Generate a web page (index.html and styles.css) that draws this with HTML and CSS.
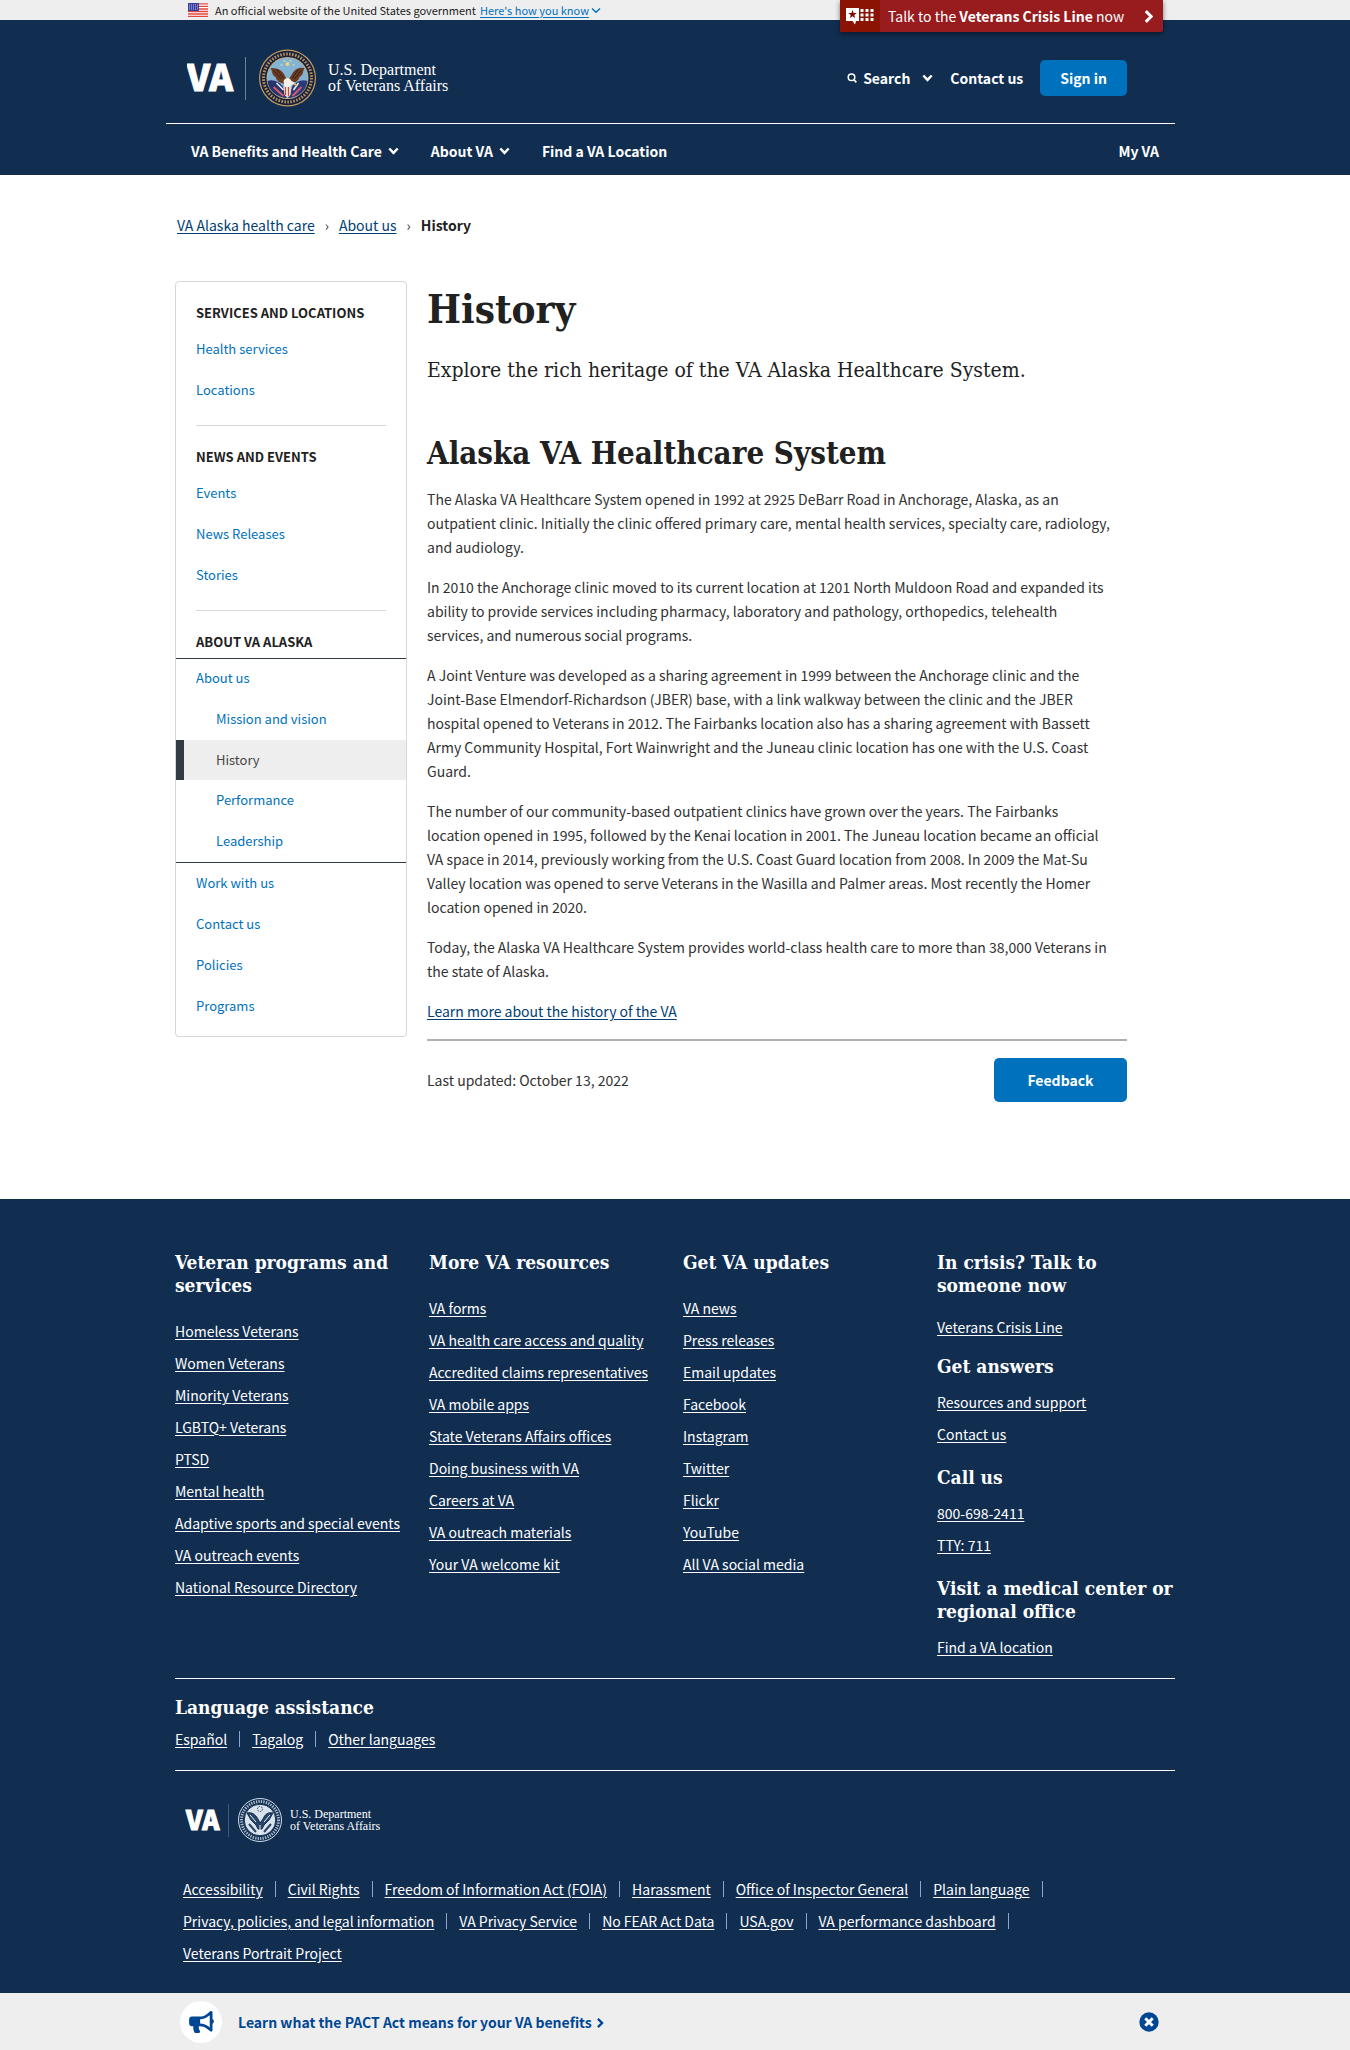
FILE: index.html
```html
<!DOCTYPE html>
<html lang="en">
<head>
<meta charset="utf-8">
<meta name="viewport" content="width=device-width, initial-scale=1">
<title>History | VA Alaska Health Care</title>
<link rel="stylesheet" href="styles.css">
</head>
<body>
<svg width="0" height="0" class="sprite" aria-hidden="true">
  <symbol id="chev-down" viewBox="0 0 10 7"><path d="M1.2 1.2 5 5.2l3.800-4" fill="none" stroke="currentColor" stroke-width="2.200"/></symbol>
  <symbol id="chev-right" viewBox="0 0 8 12"><path d="M1.500 1 6.500 6l-5 5" fill="none" stroke="currentColor" stroke-width="2.800"/></symbol>
</svg>

<div class="gov-banner">
  <div class="wrap gov-inner">
    <svg class="flag" viewBox="0 0 20 14" aria-hidden="true">
      <rect width="20" height="14" fill="#fff"/>
      <path d="M0 .8h20M0 3.400h20M0 6h20M0 8.500h20M0 11h20M0 13.400h20" stroke="#e0483e" stroke-width="1.300"/>
      <rect width="11" height="8" fill="#3a3f9f"/>
      <path d="M1 2h9M1 4h9M1 6h9" stroke="#b9bce8" stroke-width="1" stroke-dasharray="1 1"/>
    </svg>
    <span>An official website of the United States government</span>
    <button type="button" class="know"><span>Here's how you know</span><svg viewBox="0 0 10 7" aria-hidden="true"><path d="M1 1.500 5 5.300l4-3.800" fill="none" stroke="currentColor" stroke-width="1.400"/></svg></button>
    <a class="crisis" href="#crisis">
      <span class="crisis-icon">
        <svg viewBox="0 0 29 18" aria-hidden="true">
          <path d="M1 1h13v13h-3l-1 3.500L7.500 14H1z" fill="#fff"/>
          <path d="m7.500 3 1.100 3.100h3.200L9.300 8l.9 3.100-2.700-1.900-2.700 1.900.9-3.100-2.500-1.900h3.200z" fill="#7c0b05"/>
          <path d="M15.500 3.500h13M15.500 8h13M15.500 12.500h13" stroke="#fff" stroke-width="3" stroke-dasharray="3 2"/>
        </svg>
      </span>
      <span class="crisis-text">Talk to the <b>Veterans Crisis Line</b> now</span>
      <svg class="crisis-chev" aria-hidden="true"><use href="#chev-right"/></svg>
    </a>
  </div>
</div>

<header class="header">
  <div class="wrap">
    <div class="header-main">
      <a class="logo" href="#home" aria-label="VA, U.S. Department of Veterans Affairs">
        <svg width="270" height="60" viewBox="0 0 270 60">
          <text x="0" y="43" class="logo-va">VA</text>
          <path d="M58.500 9v43" stroke="#6d7f9b"/>
          <g transform="translate(100.500 30)">
            <circle r="28.500" fill="#c79a5d"/>
            <circle r="27.300" fill="#15233f"/>
            <circle r="24" fill="none" stroke="#b98f5c" stroke-width="3" stroke-dasharray="1.600 1.400"/>
            <circle r="21" fill="#d8a869"/>
            <circle r="20.200" fill="#84b4d4"/>
            <path d="M-20 3C-15 1-9 3-5 8L0 20C-10 20-19 13-20 3z" fill="#26356e"/>
            <path d="M20 3C15 1 9 3 5 8L0 20C10 20 19 13 20 3z" fill="#2b3a78"/>
            <path d="M-14 9-4 18M14 9 5 18" stroke="#d7596a" stroke-width="2"/>
            <path d="M-11 5-4 12M11 5 6 12" stroke="#eceff5" stroke-width="1.500"/>
            <path d="M-17-10C-11-10-6-9-3-3L0 3 4-3C7-9 11-11 17-10 15-6 16-3 12-1 11 3 7 5 3 6L-3 6C-7 5-11 3-12-1-16-3-15-7-17-10z" fill="#6b3c24"/>
            <path d="M-14-8-6 1M-11-9-4 0M14-8 7 1M11-9 5 0" stroke="#3a1f18"/>
            <path d="M-4 3C-2-1 2-1 4 3L8 5 4 7 2 10-3 9z" fill="#f5efe6"/>
            <path d="M8 5 10 8 6 7z" fill="#eab64a"/>
            <path d="M-4 9h8l-1 8-3 3-3-3z" fill="#e9d3c5"/>
            <path d="M-2 9v8M1 9v9" stroke="#c8484f"/>
            <circle cy="-14" r="2" fill="#f0d27a"/>
            <path d="M-7-13h2M5-13h2M-4-17h2M2-17h2" stroke="#f0e3a4"/>
          </g>
          <text x="141" y="27" class="logo-dept">U.S. Department</text>
          <text x="141" y="43" class="logo-dept">of Veterans Affairs</text>
        </svg>
      </a>
      <div class="header-tools">
        <button type="button" class="search">
          <svg class="glass" viewBox="0 0 10 10" aria-hidden="true"><circle cx="4.500" cy="4.200" r="3.300" fill="none" stroke="currentColor" stroke-width="1.500"/><path d="m6.800 6.600 2.500 2.700" stroke="currentColor" stroke-width="1.700"/></svg>
          <span>Search</span>
          <svg class="chev" aria-hidden="true"><use href="#chev-down"/></svg>
        </button>
        <a href="#contact">Contact us</a>
        <button type="button" class="btn sign-in">Sign in</button>
      </div>
    </div>
    <nav class="main-nav" aria-label="Main">
      <button type="button">VA Benefits and Health Care<svg class="chev" aria-hidden="true"><use href="#chev-down"/></svg></button>
      <button type="button">About VA<svg class="chev" aria-hidden="true"><use href="#chev-down"/></svg></button>
      <a href="#find">Find a VA Location</a>
      <a class="my-va" href="#my-va">My VA</a>
    </nav>
  </div>
</header>

<div class="wrap page">
  <nav class="crumbs" aria-label="Breadcrumb">
    <a href="#alaska">VA Alaska health care</a><span>›</span><a href="#about">About us</a><span>›</span><strong>History</strong>
  </nav>
  <div class="columns">
    <nav class="side" aria-label="Section">
      <section class="side-group">
        <h2>Services and locations</h2>
        <ul>
          <li><a href="#hs">Health services</a></li>
          <li><a href="#loc">Locations</a></li>
        </ul>
      </section>
      <section class="side-group">
        <h2>News and events</h2>
        <ul>
          <li><a href="#ev">Events</a></li>
          <li><a href="#nr">News Releases</a></li>
          <li><a href="#st">Stories</a></li>
        </ul>
      </section>
      <section class="side-group">
        <h2>About VA Alaska</h2>
        <ul>
          <li class="open"><a href="#au">About us</a>
            <ul class="sub">
              <li><a href="#mv">Mission and vision</a></li>
              <li><a class="current" href="#hi" aria-current="page">History</a></li>
              <li><a href="#pe">Performance</a></li>
              <li><a href="#le">Leadership</a></li>
            </ul>
          </li>
          <li><a href="#ww">Work with us</a></li>
          <li><a href="#cu">Contact us</a></li>
          <li><a href="#po">Policies</a></li>
          <li><a href="#pr">Programs</a></li>
        </ul>
      </section>
    </nav>
    <main class="content">
      <h1>History</h1>
      <p class="intro">Explore the rich heritage of the VA Alaska Healthcare System.</p>
      <h2>Alaska VA Healthcare System</h2>
      <p>The Alaska VA Healthcare System opened in 1992 at 2925 DeBarr Road in Anchorage, Alaska, as an outpatient clinic. Initially the clinic offered primary care, mental health services, specialty care, radiology, and audiology.</p>
      <p>In 2010 the Anchorage clinic moved to its current location at 1201 North Muldoon Road and expanded its ability to provide services including pharmacy, laboratory and pathology, orthopedics, telehealth services, and numerous social programs.</p>
      <p>A Joint Venture was developed as a sharing agreement in 1999 between the Anchorage clinic and the Joint-Base Elmendorf-Richardson (JBER) base, with a link walkway between the clinic and the JBER hospital opened to Veterans in 2012. The Fairbanks location also has a sharing agreement with Bassett Army Community Hospital, Fort Wainwright and the Juneau clinic location has one with the U.S. Coast Guard.</p>
      <p>The number of our community-based outpatient clinics have grown over the years. The Fairbanks location opened in 1995, followed by the Kenai location in 2001. The Juneau location became an official VA space in 2014, previously working from the U.S. Coast Guard location from 2008. In 2009 the Mat-Su Valley location was opened to serve Veterans in the Wasilla and Palmer areas. Most recently the Homer location opened in 2020.</p>
      <p>Today, the Alaska VA Healthcare System provides world-class health care to more than 38,000 Veterans in the state of Alaska.</p>
      <p><a href="#learn">Learn more about the history of the VA</a></p>
      <div class="updated">
        <span>Last updated: October 13, 2022</span>
        <button type="button" class="btn feedback">Feedback</button>
      </div>
    </main>
  </div>
</div>

<footer class="footer">
  <div class="wrap">
    <div class="foot-cols">
      <section>
        <h2>Veteran programs and services</h2>
        <ul>
          <li><a href="#f">Homeless Veterans</a></li>
          <li><a href="#f">Women Veterans</a></li>
          <li><a href="#f">Minority Veterans</a></li>
          <li><a href="#f">LGBTQ+ Veterans</a></li>
          <li><a href="#f">PTSD</a></li>
          <li><a href="#f">Mental health</a></li>
          <li><a href="#f">Adaptive sports and special events</a></li>
          <li><a href="#f">VA outreach events</a></li>
          <li><a href="#f">National Resource Directory</a></li>
        </ul>
      </section>
      <section>
        <h2>More VA resources</h2>
        <ul>
          <li><a href="#f">VA forms</a></li>
          <li><a href="#f">VA health care access and quality</a></li>
          <li><a href="#f">Accredited claims representatives</a></li>
          <li><a href="#f">VA mobile apps</a></li>
          <li><a href="#f">State Veterans Affairs offices</a></li>
          <li><a href="#f">Doing business with VA</a></li>
          <li><a href="#f">Careers at VA</a></li>
          <li><a href="#f">VA outreach materials</a></li>
          <li><a href="#f">Your VA welcome kit</a></li>
        </ul>
      </section>
      <section>
        <h2>Get VA updates</h2>
        <ul>
          <li><a href="#f">VA news</a></li>
          <li><a href="#f">Press releases</a></li>
          <li><a href="#f">Email updates</a></li>
          <li><a href="#f">Facebook</a></li>
          <li><a href="#f">Instagram</a></li>
          <li><a href="#f">Twitter</a></li>
          <li><a href="#f">Flickr</a></li>
          <li><a href="#f">YouTube</a></li>
          <li><a href="#f">All VA social media</a></li>
        </ul>
      </section>
      <section class="contact-col">
        <h2 class="lead">In crisis? Talk to someone now</h2>
        <ul><li><a href="#f">Veterans Crisis Line</a></li></ul>
        <h2>Get answers</h2>
        <ul>
          <li><a href="#f">Resources and support</a></li>
          <li><a href="#f">Contact us</a></li>
        </ul>
        <h2>Call us</h2>
        <ul>
          <li><a href="#f">800-698-2411</a></li>
          <li><a href="#f">TTY: 711</a></li>
        </ul>
        <h2>Visit a medical center or regional office</h2>
        <ul><li><a href="#f">Find a VA location</a></li></ul>
      </section>
    </div>
    <section class="language">
      <h2>Language assistance</h2>
      <ul class="inline">
        <li><a href="#f" lang="es">Español</a></li>
        <li><a href="#f" lang="tl">Tagalog</a></li>
        <li><a href="#f">Other languages</a></li>
      </ul>
    </section>
    <a class="foot-logo" href="#home" aria-label="VA, U.S. Department of Veterans Affairs">
      <svg width="204" height="46" viewBox="0 0 204 46">
        <text x="1" y="33" class="foot-va">VA</text>
        <path d="M43.500 7v33" stroke="#3f587b"/>
        <g transform="translate(75 23)" fill="none" stroke="#d4dde8">
          <circle r="21.500"/>
          <circle r="18.500" stroke-width="3" stroke-dasharray="1.300 1.200" stroke="#aebccf"/>
          <circle r="15.800" fill="#d9e1eb" stroke="#112e51" stroke-width="1"/>
          <path d="M-13-7C-8-8-5-6-2-1L0 3 3-1C5-6 8-8 13-7L9 0 4 5 2 9-2 9-4 5-9 0z" fill="#274467" stroke="#112e51"/>
          <path d="M-10-5-4 2M10-5 4 2M-5 7-9 11M5 7 9 11M0 5v9" stroke="#eef2f7"/>
          <path d="M-11 4-4 12M11 4 4 12" stroke="#274467" stroke-width="2"/>
          <circle cy="-11" r="2.500" stroke="#274467" stroke-dasharray="1.500 1"/>
        </g>
        <text x="105" y="21" class="foot-dept">U.S. Department</text>
        <text x="105" y="33" class="foot-dept">of Veterans Affairs</text>
      </svg>
    </a>
    <ul class="inline legal">
      <li><a href="#f">Accessibility</a></li>
      <li><a href="#f">Civil Rights</a></li>
      <li><a href="#f">Freedom of Information Act (FOIA)</a></li>
      <li><a href="#f">Harassment</a></li>
      <li><a href="#f">Office of Inspector General</a></li>
      <li><a href="#f">Plain language</a></li>
      <li><a href="#f">Privacy, policies, and legal information</a></li>
      <li><a href="#f">VA Privacy Service</a></li>
      <li><a href="#f">No FEAR Act Data</a></li>
      <li><a href="#f">USA.gov</a></li>
      <li><a href="#f">VA performance dashboard</a></li>
      <li><a href="#f">Veterans Portrait Project</a></li>
    </ul>
  </div>
</footer>

<aside class="promo">
  <div class="wrap promo-inner">
    <span class="promo-icon">
      <svg viewBox="0 0 576 512" aria-hidden="true"><path fill="currentColor" d="M576 240c0-23.600-13-44-32-55V32c0-8.700-7-32-32-32-7.100 0-14.200 2.400-20 7l-85 68c-42.700 34.200-96.300 53-151 53H64c-35.300 0-64 28.700-64 64v96c0 35.300 28.700 64 64 64h33.700c-1.400 10.500-2.200 21.100-2.200 32 0 39.800 9.300 77.400 25.600 110.900 5.200 10.700 16.500 17.100 28.400 17.100h74.300c26 0 41.600-29.800 25.900-50.500-16.400-21.500-26.100-48.400-26.100-77.500 0-11.100 1.600-21.800 4.400-32H256c54.700 0 108.300 18.800 151 53l85 68c5.700 4.500 12.700 7 20 7 24.900 0 32-22.800 32-32V295c19-11 32-31.400 32-55zm-96 141.400-33-26.400C393 311.800 325.200 288 256 288v-96c69.200 0 137-23.800 191-67l33-26.400v282.800z"/></svg>
    </span>
    <a href="#pact">Learn what the PACT Act means for your VA benefits<svg class="promo-chev" aria-hidden="true"><use href="#chev-right"/></svg></a>
    <button type="button" class="close" aria-label="Dismiss">
      <svg viewBox="0 0 20 20" aria-hidden="true"><circle cx="10" cy="10" r="9.700" fill="currentColor"/><path d="m6.300 6.300 7.400 7.400m0-7.400-7.400 7.400" stroke="#fff" stroke-width="3"/></svg>
    </button>
  </div>
</aside>
</body>
</html>
```
FILE: styles.css
```css
:root {
  --sans: "Noto Sans CJK SC", "Noto Sans", sans-serif;
  --slab: "DejaVu Serif Condensed", "DejaVu Serif", serif;
  --navy: #112e51;
  --blue: #0071bc;
}
* { box-sizing: border-box; }
body {
  margin: 0;
  font: 14px/24px var(--sans);
  color: #323232;
  background: #fff;
}
.sprite { position: absolute; }
ul { list-style: none; margin: 0; padding: 0; }
h1, h2, p { margin: 0; }
a { text-underline-offset: 2px; }
button { font: inherit; color: inherit; background: none; border: 0; padding: 0; cursor: pointer; }
.wrap { max-width: 1000px; margin: 0 auto; }
.chev { width: 11px; height: 8px; }
.btn { background: var(--blue); color: #fff; font-weight: 700; border-radius: 5px; }

.gov-banner { background: #eee; }
.gov-inner {
  position: relative;
  display: flex;
  align-items: center;
  height: 20px;
  padding-left: 13px;
  font-size: 11px;
  line-height: 20px;
  color: #212121;
}
.flag { width: 20px; height: 14px; margin-right: 7px; }
.know { display: flex; align-items: center; gap: 2px; margin-left: 4px; color: var(--blue); text-decoration: underline; text-underline-offset: 2px; }
.know svg { width: 10px; height: 7px; }
.crisis {
  position: absolute;
  z-index: 1;
  top: 0;
  right: 12px;
  width: 323px;
  height: 32px;
  display: flex;
  align-items: center;
  background: #981b1e;
  color: #fff;
  font-size: 14px;
  text-decoration: none;
  border-radius: 0 0 2px 2px;
  box-shadow: 0 2px 5px rgba(0, 0, 0, .5);
}
.crisis-icon { width: 40px; height: 32px; padding: 7px 5px; background: #8b1303; }
.crisis-icon svg { display: block; width: 29px; height: 18px; }
.crisis-text { flex: 1; padding-left: 8px; }
.crisis-chev { width: 9px; height: 13px; margin-right: 10px; }

.header { background: var(--navy); color: #fff; font-weight: 700; }
.header a { color: #fff; text-decoration: none; }
.header-main {
  display: flex;
  justify-content: space-between;
  align-items: center;
  height: 104px;
  margin-left: -9px;
  padding: 12px 48px 0 21px;
  border-bottom: 1px solid #fff;
}
.logo svg { display: block; }
.logo-va { font: 900 36px var(--sans); fill: #fff; stroke: #fff; }
.logo-dept { font: 400 16px "Liberation Serif", serif; fill: #fff; }
.header-tools { display: flex; align-items: center; gap: 17px; }
.search { display: flex; align-items: center; font-weight: 700; }
.glass { width: 10px; height: 10px; margin-right: 6px; }
.search .chev { margin-left: 12px; }
.sign-in { height: 36px; padding: 0 20px; }
.main-nav { display: flex; align-items: center; gap: 32px; height: 51px; padding: 2px 16px 0; }
.main-nav button { display: flex; align-items: center; gap: 6px; font-weight: 700; }
.my-va { margin-left: auto; }

.page { padding-bottom: 97px; }
.crumbs { display: flex; padding: 38px 2px 0; }
.crumbs span { margin: 0 10px; }
.crumbs a, .content a { color: #003e73; }
.crumbs strong { color: #212121; }
.columns {
  display: grid;
  grid-template-columns: 232px 700px;
  column-gap: 20px;
  align-items: start;
  margin-top: 44px;
}
.side { border: 1px solid #d6d7d9; border-radius: 4px; padding: 19px 0 9px; font-size: 13px; }
.side h2 { padding: 0 20px 4px; font: 700 13px/24px var(--sans); color: #212121; text-transform: uppercase; }
.side-group + .side-group::before {
  content: "";
  display: block;
  margin: 14px 20px 19px;
  border-top: 1px solid #d6d7d9;
}
.side a { display: block; padding: 0 20px 2px; line-height: 39px; color: var(--blue); text-decoration: none; }
.side .open { border-top: 1px solid #323a45; border-bottom: 1px solid #323a45; }
.side .open > a { line-height: 38px; }
.side .sub a { padding-left: 40px; }
.side .sub a.current { padding: 0 20px 0 32px; border-left: 8px solid #323a45; background: #eee; color: #494440; line-height: 40px; }

.content h1 { font: 700 40px/52px var(--slab); color: #212121; margin-top: 2px; }
.content .intro { font: 21px/32px var(--slab); color: #212121; margin: 19px 0 47px; }
.content h2 { font: 700 31px/40px var(--slab); color: #212121; margin-bottom: 14px; }
.content p { margin-bottom: 16px; padding-right: 15px; }
.updated {
  display: flex;
  justify-content: space-between;
  align-items: center;
  padding-top: 17px;
  border-top: 2px solid #aeb0b5;
}
.feedback { width: 133px; height: 44px; }

.footer { background: var(--navy); color: #fff; padding: 52px 0 24px; }
.footer a { color: #fff; }
.footer h2 { font: 700 19px/23px var(--slab); }
.foot-cols { display: grid; grid-template-columns: repeat(4, 1fr); column-gap: 16px; }
.foot-cols h2 { margin-bottom: 18px; }
.foot-cols li { line-height: 32px; }
.foot-cols .contact-col h2 { margin: 16px 0 8px; }
.foot-cols .contact-col h2.lead { margin: 0 0 14px; }
.contact-col h2.lead + ul { margin-bottom: -4px; }
.language { margin-top: 15px; padding: 17px 0 15px; border: solid #fff; border-width: 1px 0; }
.inline { display: flex; flex-wrap: wrap; line-height: 32px; }
.inline li { display: flex; align-items: center; }
.inline li:not(:last-child)::after { content: ""; width: 1px; height: 16px; margin: 0 12px; background: #8ba6ca; }
.language .inline { padding-top: 4px; }
.foot-logo { display: block; width: 204px; margin: 26px 0 30px 10px; }
.foot-logo svg { display: block; }
.foot-va { font: 900 26px var(--sans); fill: #fff; stroke: #fff; }
.foot-dept { font: 400 12px "Liberation Serif", serif; fill: #fff; }
.legal { padding: 0 8px; }

.promo { background: #eee; color: #003e73; }
.promo-inner { display: flex; align-items: center; height: 58px; padding: 0 16px 0 5px; font-weight: 700; }
.promo-icon { display: grid; place-items: center; width: 42px; height: 42px; margin-right: 16px; border-radius: 50%; background: #fff; color: #004793; }
.promo-icon svg { width: 25px; height: 22px; }
.promo a { color: #004793; text-decoration: none; }
.promo-chev { width: 8px; height: 10px; margin-left: 4px; }
.close { margin-left: auto; color: #004793; }
.close svg { display: block; width: 20px; height: 20px; }
```
